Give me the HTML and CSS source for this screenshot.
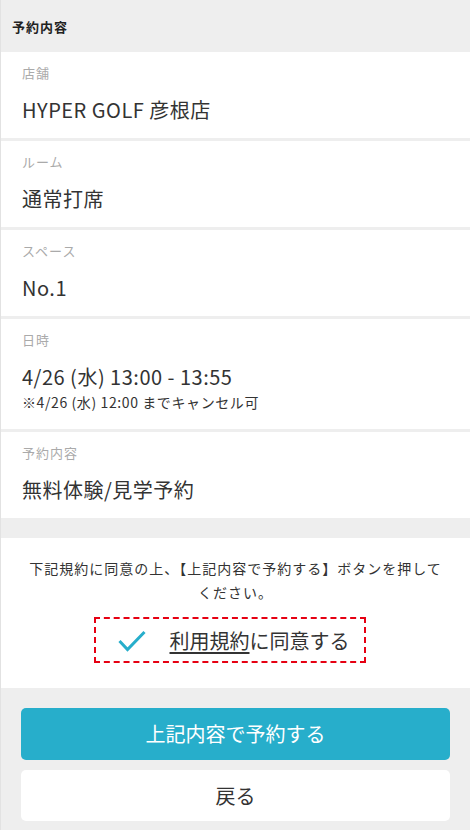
FILE: index.html
```html
<!DOCTYPE html>
<html lang="ja">
<head>
  <meta charset="UTF-8">
  <title>予約確認</title>
  <link rel="stylesheet" href="styles.css">
</head>
<body>

  <div class="page">
    <!-- 予約内容 -->
    <div class="section-title">予約内容</div>

    <div class="list">
      <div class="item">
        <div class="item-label">店舗</div>
        <div class="item-value">HYPER GOLF 彦根店</div>
      </div>
      <div class="item">
        <div class="item-label">ルーム</div>
        <div class="item-value">通常打席</div>
      </div>
      <div class="item">
        <div class="item-label">スペース</div>
        <div class="item-value">No.1</div>
      </div>
      <div class="item item-date">
        <div class="item-label">日時</div>
        <div class="item-value">4/26 (水) 13:00 - 13:55</div>
        <div class="item-note">※4/26 (水) 12:00 までキャンセル可</div>
      </div>
      <div class="item">
        <div class="item-label">予約内容</div>
        <div class="item-value">無料体験/見学予約</div>
      </div>
    </div>

    <!-- 規約同意 -->
    <div class="agree">
      <p class="agree-text">下記規約に同意の上、【上記内容で予約する】ボタンを押してください。</p>
      <label class="agree-box">
        <svg class="check" width="28" height="22" viewBox="0 0 28 22">
          <path d="M1.5 11 L9.5 19.5 L26.5 2" fill="none" stroke="#27aecb" stroke-width="3"/>
        </svg>
        <span><a href="#" class="terms">利用規約</a>に同意する</span>
      </label>
    </div>

    <!-- ボタン -->
    <div class="actions">
      <a href="#" class="btn btn-primary">上記内容で予約する</a>
      <a href="#" class="btn btn-back">戻る</a>
    </div>
  </div>

</body>
</html>
```

FILE: styles.css
```css
body {
  margin: 0;
  font-family: "Noto Sans CJK JP", "Noto Sans", sans-serif;
  color: #333;
  background-color: #eee;
}

.page {
  border-left: 1px solid #e2e2e2;
  min-height: 830px;
}

.section-title {
  height: 52px;
  line-height: 54px;
  padding-left: 11px;
  font-size: 13px;
  font-weight: bold;
  letter-spacing: 1px;
  color: #222;
}

.list {
  display: flex;
  flex-direction: column;
  gap: 3px;
}

.item {
  background-color: white;
  padding: 11px 21px 13px;
}

.item-label {
  font-size: 13px;
  line-height: 20px;
  letter-spacing: 1px;
  color: #aaa;
}

.item-value {
  margin-top: 12px;
  font-size: 20px;
  line-height: 30px;
  letter-spacing: 0.5px;
}

.item-note {
  font-size: 14px;
  line-height: 20px;
  letter-spacing: 0.6px;
  margin-top: 0;
}

.item-date {
  padding-bottom: 17px;
}

.agree {
  margin-top: 20px;
  background-color: white;
  padding: 18px 22px 25px;
  text-align: center;
}

.agree-text {
  margin: 0 auto;
  max-width: 424px;
  font-size: 14px;
  line-height: 24px;
  letter-spacing: 1px;
}

.agree-box {
  display: inline-flex;
  align-items: center;
  gap: 24px;
  margin-top: 13px;
  margin-right: 12px;
  height: 42px;
  padding: 0 14px 0 22px;
  border: 2px dashed #e60012;
  font-size: 20px;
  cursor: pointer;
}

.check {
  margin-top: 2px;
}

.terms {
  color: #333;
  text-decoration: underline;
  text-underline-offset: 3px;
}

.actions {
  padding: 20px 20px 8px;
  display: flex;
  flex-direction: column;
  gap: 10px;
}

.btn {
  display: block;
  height: 52px;
  line-height: 52px;
  border-radius: 5px;
  text-align: center;
  font-size: 20px;
  text-decoration: none;
}

.btn-primary {
  background-color: #27aecb;
  color: white;
}

.btn-back {
  height: 51px;
  line-height: 51px;
  background-color: white;
  color: #333;
}
```
